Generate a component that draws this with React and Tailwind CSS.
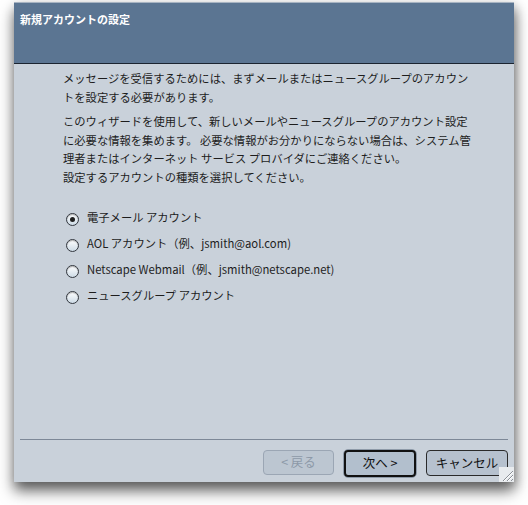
import React from "react";

const FONT = { fontFamily: '"Noto Sans CJK JP", "Noto Sans", sans-serif' };

function Radio({ checked, label }) {
  return (
    <div className="flex h-[26px] items-center">
      <span className="relative mt-[4px] flex h-[13px] w-[13px] items-center justify-center rounded-full border border-[#33383f] bg-gradient-to-b from-[#ffffff] to-[#cddbe6] shadow-[inset_0_1px_1px_rgba(0,0,0,0.3)]">
        {checked && <span className="h-[5px] w-[5px] rounded-full bg-[#1e1e1e]" />}
      </span>
      <span className="ml-[8px] text-[11.3px] text-[#1d1d1d]" style={FONT}>
        {label}
      </span>
    </div>
  );
}

export default function App() {
  return (
    <div className="h-[505px] w-[528px] overflow-hidden bg-white" style={FONT}>
      <div className="pl-[14px] pt-[2px]">
        <div className="flex h-[480px] w-[500px] flex-col bg-[#c9d1da] shadow-[0_9px_14px_rgba(0,0,0,0.55),2px_4px_10px_rgba(0,0,0,0.25)]">
          <div className="h-[61px] border-t border-[#a8b4c2] bg-[#5b7592] pl-[6px] pt-[2px]">
            <span className="text-[11px] font-bold text-white">新規アカウントの設定</span>
          </div>
          <div className="h-[1px] bg-[#1b2430]" />
          <div className="flex flex-1 flex-col">
            <div className="pl-[49px] pt-[5px] text-[11.3px] leading-[18.5px] text-[#1d1d1d]">
              <p>
                メッセージを受信するためには、まずメールまたはニュースグループのアカウン
                <br />
                トを設定する必要があります。
              </p>
              <p className="mt-[6px]">
                このウィザードを使用して、新しいメールやニュースグループのアカウント設定
                <br />
                に必要な情報を集めます。 必要な情報がお分かりにならない場合は、システム管
                <br />
                理者またはインターネット サービス プロバイダにご連絡ください。
              </p>
              <p>設定するアカウントの種類を選択してください。</p>
            </div>
            <div className="mt-[18px] flex flex-col pl-[52px]">
              <Radio checked label="電子メール アカウント" />
              <Radio label="AOL アカウント（例、jsmith@aol.com)" />
              <Radio label="Netscape Webmail（例、jsmith@netscape.net)" />
              <Radio label="ニュースグループ アカウント" />
            </div>
            <div className="flex-1" />
            <div className="mx-[6px] h-[2px] border-t border-[#7d8897] border-b-white/40" />
            <div className="flex h-[41px] items-start justify-end pt-[8px] pr-[6px]">
              <button className="mt-[1px] flex h-[25px] w-[71px] items-center justify-center rounded-[4px] border border-[#9ba6b4] bg-[#bcc6d1] text-[12.5px] text-[#8d99a8]">
                &lt; 戻る
              </button>
              <div className="ml-[9px] rounded-[5px] border border-[#8e9aa8]">
                <button className="flex h-[27px] w-[72px] items-center justify-center rounded-[4px] border-2 border-[#111] bg-[#b2bfcd] text-[12.5px] text-[#111]">
                  次へ &gt;
                </button>
              </div>
              <button className="ml-[9px] mt-[1px] flex h-[26px] w-[82px] items-center justify-center rounded-[4px] border border-[#2a2a2a] bg-[#b6c1ce] text-[12.5px] text-[#111]">
                キャンセル
              </button>
            </div>
          </div>
        </div>
      </div>
      <div className="pointer-events-none absolute left-[499px] top-[467px] h-[15px] w-[15px]">
        <svg width="15" height="15" viewBox="0 0 15 15">
          <rect width="15" height="15" fill="#e8ebee" />
          <path d="M14 4 L4 14 M14 8 L8 14 M14 12 L12 14" stroke="#8a8f96" strokeWidth="1" />
          <path d="M14 5 L5 14 M14 9 L9 14" stroke="#ffffff" strokeWidth="1" />
        </svg>
      </div>
    </div>
  );
}
